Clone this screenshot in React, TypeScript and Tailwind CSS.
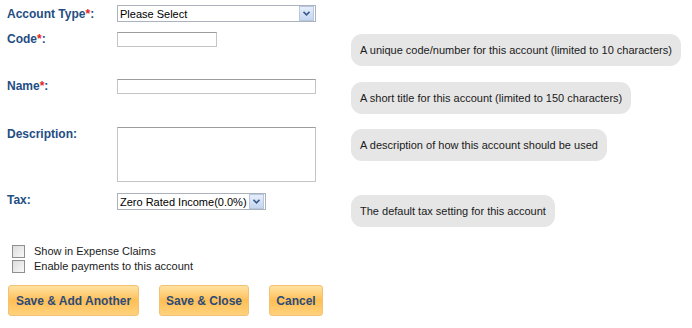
import React from "react";

const font = { fontFamily: '"Liberation Sans", Arial, sans-serif' };

function Label({ text, required }: { text: string; required?: boolean }) {
  return (
    <div className="w-[110px] shrink-0 pl-[7px] text-[12px] font-bold leading-[14px] text-[#244d83]">
      {text}
      {required && <span className="text-[#e4241c]">*</span>}:
    </div>
  );
}

function Tip({ children }: { children: React.ReactNode }) {
  return (
    <div className="rounded-[11px] bg-[#e6e6e6] px-[9px] py-[9px] text-[11px] leading-[14px] text-[#1a1a1a]">
      {children}
    </div>
  );
}

function Arrow() {
  return (
    <div className="flex h-[15px] w-[15px] items-center justify-center border border-[#b7c7dd] bg-gradient-to-b from-[#e6eefb] to-[#c5d6f0]">
      <svg width="7" height="5" viewBox="0 0 7 5">
        <path d="M0.5 0.8 L3.5 3.8 L6.5 0.8" fill="none" stroke="#3b5a8c" strokeWidth="1.6" />
      </svg>
    </div>
  );
}

function Checkbox({ label }: { label: string }) {
  return (
    <div className="flex h-[15px] items-center gap-[9px] text-[11px] leading-[15px] text-[#1a1a1a]">
      <span className="h-[13px] w-[13px] border border-[#8f8f8f] bg-gradient-to-br from-[#dcdcdc] to-[#f8f8f8]" />
      <span>{label}</span>
    </div>
  );
}

function OrangeButton({ text, className }: { text: string; className: string }) {
  return (
    <button
      className={`h-[31px] rounded-[3px] border border-[#f1c276] bg-gradient-to-b from-[#ffe2a0] via-[#ffbf55] to-[#ffd27c] px-0 text-center text-[12px] font-bold leading-[14px] text-[#2b4b79] ${className}`}
    >
      {text}
    </button>
  );
}

export default function App() {
  return (
    <div className="h-[328px] w-[692px] overflow-hidden bg-white" style={font}>
      <div className="flex h-[22px] items-start pt-[5px]">
        <div className="pt-[2px]">
          <Label text="Account Type" required />
        </div>
        <div className="ml-[7px] flex h-[17px] w-[199px] items-center justify-between border border-[#a9b2bd] bg-white pl-[2px] pr-[1px] text-[11px] leading-[14px] text-black">
          <span>Please Select</span>
          <Arrow />
        </div>
      </div>

      <div className="mt-[10px] flex h-[47px] items-start">
        <Label text="Code" required />
        <div className="ml-[7px] w-[234px] shrink-0">
          <div className="h-[15px] w-[100px] border border-[#c4c4c4] border-t-[#9c9c9c] bg-white" />
        </div>
        <div className="pt-[2px]">
          <Tip>A unique code/number for this account (limited to 10 characters)</Tip>
        </div>
      </div>

      <div className="flex h-[48px] items-start">
        <Label text="Name" required />
        <div className="ml-[7px] w-[234px] shrink-0">
          <div className="h-[15px] w-[199px] border border-[#c4c4c4] border-t-[#9c9c9c] bg-white" />
        </div>
        <div className="pt-[3px]">
          <Tip>A short title for this account (limited to 150 characters)</Tip>
        </div>
      </div>

      <div className="flex h-[66px] items-start">
        <Label text="Description" />
        <div className="ml-[7px] w-[234px] shrink-0">
          <div className="h-[55px] w-[199px] border border-[#c4c4c4] border-t-[#9c9c9c] bg-white" />
        </div>
        <div className="pt-[2px]">
          <Tip>A description of how this account should be used</Tip>
        </div>
      </div>

      <div className="flex h-[51px] items-start">
        <Label text="Tax" />
        <div className="ml-[7px] w-[234px] shrink-0">
          <div className="flex h-[17px] w-[149px] items-center justify-between border border-[#a9b2bd] bg-white pl-[2px] pr-[1px] text-[11px] leading-[14px] text-black">
            <span>Zero Rated Income(0.0%)</span>
            <Arrow />
          </div>
        </div>
        <div className="pt-[2px]">
          <Tip>The default tax setting for this account</Tip>
        </div>
      </div>

      <div className="flex flex-col pl-[12px]">
        <Checkbox label="Show in Expense Claims" />
        <Checkbox label="Enable payments to this account" />
      </div>

      <div className="flex gap-[20px] pl-[8px] pt-[11px]">
        <OrangeButton text="Save & Add Another" className="w-[131px]" />
        <OrangeButton text="Save & Close" className="w-[90px]" />
        <OrangeButton text="Cancel" className="w-[54px]" />
      </div>
    </div>
  );
}
